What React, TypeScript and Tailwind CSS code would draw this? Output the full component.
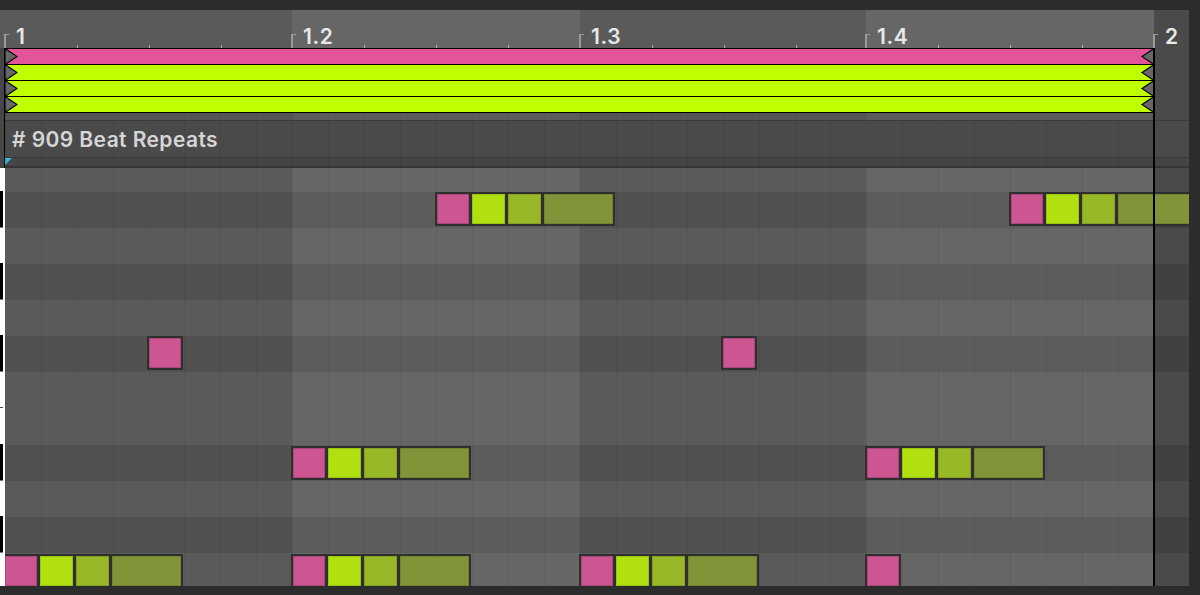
const BEATS = [
  { label: "1", w: "w-[287px]", light: false },
  { label: "1.2", w: "w-[288px]", light: true },
  { label: "1.3", w: "w-[286px]", light: false },
  { label: "1.4", w: "w-[288px]", light: true },
];

// piano roll rows, top to bottom (dark = black key row)
const ROWS = [
  { h: "h-[24px]", dark: false },
  { h: "h-[36px]", dark: true },
  { h: "h-[36px]", dark: false },
  { h: "h-[36px]", dark: true },
  { h: "h-[36px]", dark: false },
  { h: "h-[36px]", dark: true },
  { h: "h-[36px]", dark: false },
  { h: "h-[37px]", dark: false, split: true },
  { h: "h-[36px]", dark: true },
  { h: "h-[36px]", dark: false },
  { h: "h-[36px]", dark: true },
  { h: "h-[33px]", dark: false },
];

const CLIPS = ["bg-[#e2559b]", "bg-[#bfff00]", "bg-[#bfff00]", "bg-[#bfff00]"];

const NOTE_FILL = {
  pink: "w-[32px] bg-[#cc5592] border-[#a9477a]",
  lime: "w-[33px] bg-[#b0e00f] border-[#98c40c]",
  green: "w-[33px] bg-[#98b828] border-[#85a222]",
  olive: "w-[69px] bg-[#829438] border-[#728332]",
  oliveLong: "w-[72px] bg-[#829438] border-[#728332]",
};

type Kind = keyof typeof NOTE_FILL;

const GROUP: Kind[] = ["pink", "lime", "green", "olive"];

// page coordinates of the notes (x, y, kinds)
const NOTES: [number, number, Kind[]][] = [
  [435, 192, GROUP],
  [1009, 192, ["pink", "lime", "green", "oliveLong"]],
  [147, 336, ["pink"]],
  [721, 336, ["pink"]],
  [291, 446, GROUP],
  [865, 446, GROUP],
  [3, 554, GROUP],
  [291, 554, GROUP],
  [579, 554, GROUP],
  [865, 554, ["pink"]],
];

function NoteBox({ x, y, kinds }: { x: number; y: number; kinds: Kind[] }) {
  return (
    <div
      className="absolute flex h-[34px] gap-[3px] bg-[#2f2f2f] p-[2px]"
      style={{ left: x - 5, top: y - 168 }}
    >
      {kinds.map((k, i) => (
        <div key={i} className={`h-full border ${NOTE_FILL[k]}`} />
      ))}
    </div>
  );
}

function Gutter() {
  return <div className="w-[5px] shrink-0 border-r border-black bg-[#474747]" />;
}

function Ruler() {
  return (
    <div className="flex h-[38px] shrink-0">
      <div className="w-[5px] bg-[#5a5a5a]" />
      {BEATS.map((b) => (
        <div
          key={b.label}
          className={`relative ${b.w} ${b.light ? "bg-[#666666]" : "bg-[#5a5a5a]"} pl-[11px] pt-[16px]`}
        >
          <div className="absolute left-[-1px] top-[24px] h-[14px] w-[5px] border-l-2 border-t border-[#9a9a9a]" />
          <span className="block text-[21px] leading-none font-semibold tracking-[0.03em] text-[#e8e8e8]">
            {b.label}
          </span>
          <div className="absolute bottom-0 left-[72px] h-[3px] w-px bg-[#b4b4b4]" />
          <div className="absolute bottom-0 left-[144px] h-[3px] w-px bg-[#b4b4b4]" />
          <div className="absolute bottom-0 left-[216px] h-[3px] w-px bg-[#b4b4b4]" />
        </div>
      ))}
      <div className="relative w-[35px] bg-[#4a4a4a] pl-[11px] pt-[16px]">
        <div className="absolute left-[-1px] top-[24px] h-[14px] w-[5px] border-l-2 border-t border-[#9a9a9a]" />
        <span className="block text-[21px] leading-none font-semibold text-[#e8e8e8]">2</span>
      </div>
    </div>
  );
}

function ClipBars() {
  return (
    <div className="flex h-[65px] shrink-0">
      <Gutter />
      <div className="flex w-[1149px] flex-col border-b border-black">
        {CLIPS.map((c, i) => (
          <div key={i} className={`relative h-[16px] border-t border-black ${c}`}>
            <svg className="absolute left-0 top-[-1px]" width="13" height="17" viewBox="0 0 13 17">
              <polygon points="0,0.5 12,8.5 0,16.5" fill="#676767" stroke="#000" strokeWidth="1.2" />
            </svg>
            <svg className="absolute right-0 top-[-1px]" width="13" height="17" viewBox="0 0 13 17">
              <polygon points="13,0.5 1,8.5 13,16.5" fill="#676767" stroke="#000" strokeWidth="1.2" />
            </svg>
          </div>
        ))}
      </div>
      <div className="w-[35px] bg-[#4a4a4a]" />
    </div>
  );
}

function Band() {
  return (
    <div className="flex h-[7px] shrink-0">
      <Gutter />
      {BEATS.map((b) => (
        <div key={b.label} className={`${b.w} ${b.light ? "bg-[#5c5c5c]" : "bg-[#545454]"}`} />
      ))}
      <div className="w-[35px] bg-[#4a4a4a]" />
    </div>
  );
}

function Header() {
  return (
    <div className="flex h-[37px] shrink-0">
      <Gutter />
      <div className="flex flex-1 items-center border-t border-[#3c3c3c] bg-[#4a4a4a] pl-[7px]">
        <span className="text-[21px] leading-none font-semibold tracking-[0.02em] text-[#d6d6d6]">
          # 909 Beat Repeats
        </span>
      </div>
    </div>
  );
}

function SubBand() {
  return (
    <div className="flex h-[11px] shrink-0">
      <Gutter />
      <div className="relative flex-1 border-t border-[#383838] border-b-2 border-b-[#353535] bg-[#454545]">
        <svg className="absolute left-0 top-0" width="8" height="8" viewBox="0 0 8 8">
          <polygon points="0,0 7,0 0,7" fill="#3ab2df" />
        </svg>
      </div>
    </div>
  );
}

function Rows() {
  return (
    <div className="flex flex-1 flex-col">
      {ROWS.map((r, i) => (
        <div key={i} className={`flex ${r.h}`}>
          <div className="relative w-[5px] bg-white">
            {r.dark && <div className="absolute left-0 top-[-1px] bottom-0 w-[3px] border-b border-[#777] bg-black" />}
            {r.split && <div className="absolute left-0 top-[-1px] h-px w-[3px] bg-[#444]" />}
          </div>
          {BEATS.map((b) => (
            <div
              key={b.label}
              className={`${b.w} ${
                b.light
                  ? r.dark
                    ? "bg-[#5c5c5c]"
                    : "bg-[#666666]"
                  : r.dark
                    ? "bg-[#515151]"
                    : "bg-[#5a5a5a]"
              }`}
            />
          ))}
          <div className={`w-[35px] ${r.dark ? "bg-[#414141]" : "bg-[#4a4a4a]"}`} />
        </div>
      ))}
    </div>
  );
}

function GridLines() {
  return (
    <div className="pointer-events-none absolute left-[5px] top-[102px] bottom-0 flex">
      {BEATS.map((b) => (
        <div key={b.label} className={`flex ${b.w}`}>
          {Array.from({ length: 8 }).map((_, i) => (
            <div key={i} className="flex-1 border-l border-black/[0.05]" />
          ))}
        </div>
      ))}
    </div>
  );
}

function Notes() {
  return (
    <div className="absolute left-[5px] top-[158px] right-0 bottom-0 overflow-hidden">
      {NOTES.map(([x, y, kinds], i) => (
        <NoteBox key={i} x={x} y={y} kinds={kinds} />
      ))}
    </div>
  );
}

export default function App() {
  return (
    <div className="h-[595px] w-[1200px] overflow-hidden bg-[#2c2c2c] pt-[10px] pr-[11px] pb-[9px] font-['Inter',sans-serif]">
      <div className="relative flex h-[576px] w-[1189px] flex-col overflow-hidden">
        <Ruler />
        <ClipBars />
        <Band />
        <Header />
        <SubBand />
        <Rows />
        <GridLines />
        <Notes />
        {/* loop end marker */}
        <div className="absolute left-[1153px] top-[38px] bottom-0 w-[2px] bg-black" />
      </div>
    </div>
  );
}
